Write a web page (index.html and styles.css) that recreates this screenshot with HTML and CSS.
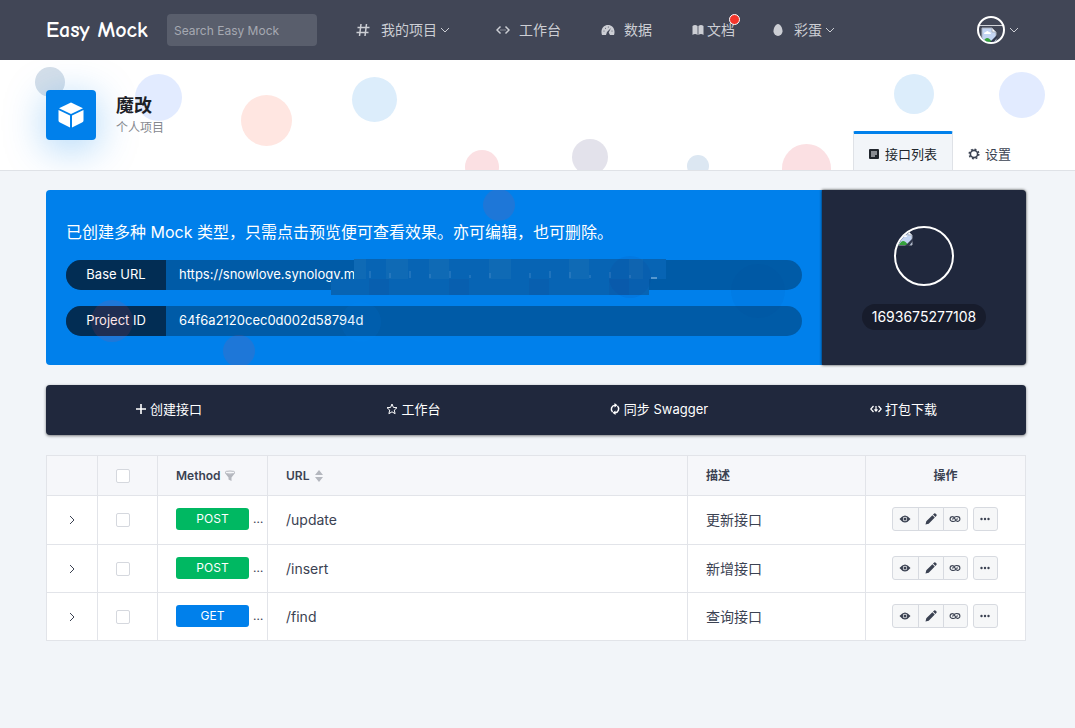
FILE: index.html
```html
<!DOCTYPE html>
<html lang="zh-CN">
<head>
<meta charset="utf-8">
<meta name="viewport" content="width=device-width, initial-scale=1">
<title>Easy Mock</title>
<link rel="stylesheet" href="styles.css">
</head>
<body>
<svg class="sprite" aria-hidden="true">
  <symbol id="down" viewBox="0 0 10 6"><path d="M1 1l4 4 4-4" fill="none" stroke="currentColor"/></symbol>
  <symbol id="right" viewBox="0 0 6 10"><path d="M1 1l4 4-4 4" fill="none" stroke="currentColor"/></symbol>
  <symbol id="eye" viewBox="0 0 12 8"><path fill-rule="evenodd" d="M.5 4Q6-3 11.500 4Q6 11 .5 4zM6 1.800a2.200 2.200 0 1 0 0 4.400 2.200 2.200 0 0 0 0-4.400z" fill="currentColor"/><circle cx="6" cy="4" r="1.500" fill="currentColor"/></symbol>
  <symbol id="pencil" viewBox="0 0 12 12"><path d="M.5 11.500l.8-3.200L7.400 2.200l2.400 2.400-6.100 6.100zM8 1.600L9.200.5q.6-.5 1.200 0l1.100 1.100q.5.600 0 1.200l-1.100 1.200z" fill="currentColor"/></symbol>
  <symbol id="link" viewBox="0 0 12 8"><path d="M7.500 4.500Q6 7 3.500 6.400A2.400 2.400 0 0 1 3.500 1.600Q5 1.400 6 4t2.500 2.400a2.400 2.400 0 0 0 0-4.800Q6 1 4.500 3.500M3 4h1.500M7.500 4H9" fill="none" stroke="currentColor" stroke-width="1.100"/></symbol>
  <symbol id="dots" viewBox="0 0 10 4"><g fill="currentColor"><circle cx="1.500" cy="2" r="1.200"/><circle cx="5" cy="2" r="1.200"/><circle cx="8.500" cy="2" r="1.200"/></g></symbol>
  <symbol id="broken" viewBox="0 0 16 16"><path d="M1 1h10l4 4v10H1z" fill="#c3d4f2" stroke="#a9afba"/><path d="M11 1v4h4z" fill="#fff" stroke="#a9afba"/><path d="M3 7q0-2 2-2 1-2 3 0 2 0 2 2z" fill="#fff"/><path d="M2 15q4-8 9 0z" fill="#35a13c"/><path d="M8 16l8-8v3l-4 5z" fill="#30374b"/></symbol>
</svg>

<header class="topbar">
  <div class="topbar-inner">
    <a class="brand" href="#">Easy Mock</a>
    <input class="search" type="search" placeholder="Search Easy Mock" aria-label="Search Easy Mock">
    <nav class="nav">
      <a class="nav-wide" href="#"><svg class="i14" viewBox="0 0 14 14"><path d="M5 1L3.500 13M10.500 1L9 13M1.500 4.500h12M.5 9.500h12" fill="none" stroke="currentColor" stroke-width="1.500"/></svg><span class="nav-text with-arrow">我的项目<svg class="arrow"><use href="#down"/></svg></span></a>
      <a href="#"><svg class="i14" viewBox="0 0 14 14"><path d="M4.500 3.500L1 7l3.500 3.500M9.500 3.500L13 7l-3.500 3.500" fill="none" stroke="currentColor" stroke-width="1.500"/><path d="M4.500 7h1m1 0h1m1 0h1" stroke="currentColor"/></svg><span class="nav-text">工作台</span></a>
      <a href="#"><svg class="i14" viewBox="0 0 14 14"><path d="M1 12C-1 6 3 2 7 2s8 4 6 10H9L7.700 9.500 10 5 6 9l-1 3z" fill="currentColor"/><g fill="#414656"><circle cx="3" cy="8" r=".5"/><circle cx="4.500" cy="5.200" r=".5"/><circle cx="7.300" cy="4" r=".5"/><circle cx="11" cy="8" r=".5"/></g></svg><span class="nav-text">数据</span></a>
      <a class="docs" href="#"><svg class="i12" viewBox="0 0 12 12"><path d="M.5 2Q3-.2 5.600 2v9Q3 9 .5 11zM6.400 2Q9-.2 11.500 2v9Q9 9 6.400 11z" fill="currentColor"/></svg><span>文档</span><i class="dot"></i></a>
      <a class="extras" href="#"><svg class="egg" viewBox="0 0 10 14"><path d="M5 1c2.500 0 4.500 4 4.500 7.200a4.500 4.800 0 0 1-9 0C.5 5 2.500 1 5 1z" fill="currentColor"/></svg><span class="nav-text with-arrow">彩蛋<svg class="arrow"><use href="#down"/></svg></span></a>
    </nav>
    <button class="account" aria-label="账户"><span class="avatar"><svg><use href="#broken"/></svg></span><svg class="arrow"><use href="#down"/></svg></button>
  </div>
</header>

<section class="project">
  <div class="bubbles" aria-hidden="true">
    <i class="b1"></i><i class="b2"></i><i class="b3"></i><i class="b4"></i><i class="b5"></i><i class="b6"></i><i class="b7"></i><i class="b8"></i><i class="b9"></i><i class="b10"></i>
  </div>
  <div class="project-inner">
    <div class="cube"><svg viewBox="0 0 26 26"><g fill="#fff"><path d="M13 .5L25 6.200 13 12 1 6.200z"/><path d="M.5 8L12 13.600v12L2 20.600Q.5 20 .5 18.500zM25.500 8L14 13.600v12l10-5q1.500-.6 1.500-2.100z"/></g></svg></div>
    <div class="project-name"><h1>魔改</h1><p>个人项目</p></div>
    <nav class="tabs">
      <a class="tab active" href="#"><svg class="i12" viewBox="0 0 12 12"><rect x="1" y="1" width="10" height="10" rx="1" fill="currentColor"/><path d="M3 4h6M3 6h6M3 8h4" stroke="#f2f5f9"/></svg>接口列表</a>
      <a class="tab" href="#"><svg class="i12" viewBox="0 0 12 12"><circle cx="6" cy="6" r="3.600" fill="none" stroke="currentColor" stroke-width="1.600"/><circle cx="6" cy="6" r="4.800" fill="none" stroke="currentColor" stroke-width="1.500" stroke-dasharray="1.900 1.870"/></svg>设置</a>
    </nav>
  </div>
</section>

<main class="content">
  <section class="banner">
    <div class="info">
      <div class="spots" aria-hidden="true"><i class="s1"></i><i class="s2"></i><i class="s3"></i><i class="s4"></i><i class="s5"></i><i class="s6"></i></div>
      <p class="lead">已创建多种 Mock 类型，只需点击预览便可查看效果。亦可编辑，也可删除。</p>
      <dl class="field"><dt>Base URL</dt><dd>https://snowlove.synology.m
        <svg class="mosaic" viewBox="0 0 336 38" aria-hidden="true">
          <path d="M23 0h312v20h-17v16H0V20h23z" fill="#0764b4"/>
          <g fill="#1670b6" opacity=".55"><path d="M23 0h12v20H23zM55 0h22v20H55zM98 0h20v20H98zM158 0h22v20h-22zM238 0h20v20h-20zM298 0h14v20h-14z"/></g>
          <g fill="#0c57a4" opacity=".3"><path d="M38 20h20v16H38zM118 20h20v16h-20zM198 20h20v16h-20zM278 20h20v16h-20z"/></g>
          <path d="M39 12v7M59 14v5M79 12v7M99 15v4M119 12v7M139 16v3M159 14v5M199 14v5M219 12v7M239 13v6M259 16v3M279 13v6M299 16v3" stroke="#68a0d5" stroke-width=".5"/>
          <path d="M320 19h6" stroke="#a6cbea"/>
        </svg></dd></dl>
      <dl class="field"><dt>Project ID</dt><dd>64f6a2120cec0d002d58794d</dd></dl>
    </div>
    <aside class="owner"><div class="portrait"><svg><use href="#broken"/></svg></div><span>1693675277108</span></aside>
  </section>

  <div class="actions">
    <button><svg class="i12" viewBox="0 0 12 12"><path d="M6 1v10M1 6h10" stroke="currentColor" stroke-width="1.600"/></svg>创建接口</button>
    <button><svg class="i12" viewBox="0 0 12 12"><path d="M6 1l1.400 3.400 3.600.3-2.700 2.400.8 3.600L6 8.800l-3.100 1.900.8-3.600L1 4.700l3.600-.3z" fill="none" stroke="currentColor"/></svg>工作台</button>
    <button><svg class="i12" viewBox="0 0 12 12"><path d="M3.500 9A4 4 0 0 1 6 2.200M8.500 3A4 4 0 0 1 6 9.800" fill="none" stroke="currentColor" stroke-width="1.500"/><path d="M5.500 0l3 2.200-3 2.300zM6.500 12l-3-2.200 3-2.300z" fill="currentColor"/></svg>同步 Swagger</button>
    <button><svg class="i12" viewBox="0 0 12 12"><path d="M3.500 3L.8 6l2.700 3M8.500 3l2.700 3-2.700 3M6 3v5M4.500 6.300L6 8l1.500-1.700" fill="none" stroke="currentColor" stroke-width="1.200"/></svg>打包下载</button>
  </div>

  <table class="apis">
    <colgroup><col class="c-expand"><col class="c-check"><col class="c-method"><col><col class="c-desc"><col class="c-ops"></colgroup>
    <thead><tr>
      <th></th><th><input type="checkbox" aria-label="全选"></th>
      <th class="left">Method <svg class="filter" viewBox="0 0 12 12"><ellipse cx="6" cy="2.500" rx="5" ry="1.500" fill="none" stroke="currentColor"/><path d="M1 3q5 2.500 10 0L7.500 7.500V11L4.500 9.500v-2z" fill="currentColor"/></svg></th>
      <th class="left">URL <svg class="sort" viewBox="0 0 8 12"><path d="M0 5l4-5 4 5zM0 7l4 5 4-5z" fill="currentColor"/></svg></th>
      <th class="left">描述</th><th>操作</th>
    </tr></thead>
    <tbody>
      <tr><td><button class="expand" aria-label="展开"><svg><use href="#right"/></svg></button></td><td><input type="checkbox" aria-label="选择 /update"></td><td><div class="method"><span class="tag post">POST</span>…</div></td><td class="left">/update</td><td class="left">更新接口</td><td><div class="ops"><div class="group"><button aria-label="预览"><svg class="i-eye"><use href="#eye"/></svg></button><button aria-label="编辑"><svg class="i12"><use href="#pencil"/></svg></button><button aria-label="复制链接"><svg class="i-link"><use href="#link"/></svg></button></div><button class="more" aria-label="更多"><svg class="i-dots"><use href="#dots"/></svg></button></div></td></tr>
      <tr><td><button class="expand" aria-label="展开"><svg><use href="#right"/></svg></button></td><td><input type="checkbox" aria-label="选择 /insert"></td><td><div class="method"><span class="tag post">POST</span>…</div></td><td class="left">/insert</td><td class="left">新增接口</td><td><div class="ops"><div class="group"><button aria-label="预览"><svg class="i-eye"><use href="#eye"/></svg></button><button aria-label="编辑"><svg class="i12"><use href="#pencil"/></svg></button><button aria-label="复制链接"><svg class="i-link"><use href="#link"/></svg></button></div><button class="more" aria-label="更多"><svg class="i-dots"><use href="#dots"/></svg></button></div></td></tr>
      <tr><td><button class="expand" aria-label="展开"><svg><use href="#right"/></svg></button></td><td><input type="checkbox" aria-label="选择 /find"></td><td><div class="method"><span class="tag get">GET</span>…</div></td><td class="left">/find</td><td class="left">查询接口</td><td><div class="ops"><div class="group"><button aria-label="预览"><svg class="i-eye"><use href="#eye"/></svg></button><button aria-label="编辑"><svg class="i12"><use href="#pencil"/></svg></button><button aria-label="复制链接"><svg class="i-link"><use href="#link"/></svg></button></div><button class="more" aria-label="更多"><svg class="i-dots"><use href="#dots"/></svg></button></div></td></tr>
    </tbody>
  </table>
</main>
</body>
</html>
```
FILE: styles.css
```css
* { box-sizing: border-box; }
body {
  margin: 0;
  background: #f2f5f9;
  color: #3b4252;
  font: 14px/20px Inter, "Noto Sans CJK SC", sans-serif;
}
a { color: inherit; text-decoration: none; }
button { font: inherit; color: inherit; border: 0; background: none; padding: 0; cursor: pointer; }
svg { flex: none; display: block; }
.sprite { position: absolute; width: 0; height: 0; }
.i14 { width: 14px; height: 14px; }
.i12 { width: 12px; height: 12px; }
.arrow { width: 10px; height: 6px; }

/* Top bar */
.topbar { background: #414656; color: #ccced4; }
.topbar-inner { display: flex; align-items: center; height: 60px; padding: 0 56px 0 46px; }
.brand { width: 121px; color: #fff; font: 700 22px/28px "Comic Neue", "Comic Sans MS", "Open Sans", sans-serif; white-space: nowrap; }
.search {
  width: 150px; height: 32px; padding: 0 7px; margin: 0;
  border: 0; border-radius: 4px; background: #595e6c;
  color: #fff; font: 12px Inter, sans-serif; outline: 0; appearance: none;
}
.search::placeholder { color: #a6a9b2; opacity: 1; }
.nav { display: flex; align-items: center; gap: 40px; margin-left: 39px; white-space: nowrap; }
.nav a { display: flex; align-items: center; gap: 9px; }
.nav .nav-wide { gap: 11px; margin-right: 6px; }
.nav-text { display: flex; align-items: center; }
.with-arrow { gap: 3px; }
.nav .docs { position: relative; gap: 3px; }
.nav .extras { gap: 11px; margin-left: -2px; }
.egg { width: 10px; height: 14px; }
.dot { position: absolute; top: -2px; right: -5px; width: 11px; height: 11px; border: 1px solid #fff; border-radius: 50%; background: #f5352b; }
.account { display: flex; align-items: center; gap: 4px; margin-left: auto; }
.avatar { display: block; width: 28px; height: 28px; padding: 9px 0 0 2px; border: 2px solid #fff; border-radius: 50%; overflow: hidden; background: linear-gradient(#d0d2d7, #d0d2d7) 0 7px / 100% 1px no-repeat; }
.avatar svg { width: 16px; height: 16px; }
.nav .dot { top: -6px; }

/* Project header */
.project { position: relative; overflow: hidden; background: #fff; border-bottom: 1px solid #dfe2e7; }
.project-inner { position: relative; display: flex; align-items: center; height: 110px; padding: 0 49px 0 46px; }
.bubbles, .spots { position: absolute; inset: 0; overflow: hidden; }
.bubbles i, .spots i { position: absolute; border-radius: 50%; }
.bubbles .b1 { left: 3.3%; top: 7px; width: 30px; height: 30px; background: #d5dfe9; }
.bubbles .b2 { left: 12.6%; top: 14px; width: 47px; height: 47px; background: #e2ebff; }
.bubbles .b3 { left: 22.4%; top: 35px; width: 51px; height: 51px; background: #ffe6e1; }
.bubbles .b4 { left: 32.7%; top: 17px; width: 45px; height: 45px; background: #dcedfb; }
.bubbles .b5 { left: 43.3%; top: 90px; width: 34px; height: 34px; background: #fbe0e3; }
.bubbles .b6 { left: 53.2%; top: 79px; width: 36px; height: 36px; background: #e3e2eb; }
.bubbles .b7 { left: 63.9%; top: 95px; width: 22px; height: 22px; background: #dce7f2; }
.bubbles .b8 { left: 72.7%; top: 84px; width: 49px; height: 49px; background: #fbe0e3; }
.bubbles .b9 { left: 83.2%; top: 14px; width: 40px; height: 40px; background: #dcedfb; }
.bubbles .b10 { left: 92.9%; top: 12px; width: 46px; height: 46px; background: #e2ebff; }
.cube { display: grid; place-items: center; width: 50px; height: 50px; border-radius: 4px; background: #0080eb; box-shadow: 0 8px 40px rgba(0, 128, 235, .35); }
.cube svg { width: 26px; height: 26px; }
.project-name { margin-left: 20px; padding-top: 2px; }
.project-name h1 { margin: 0; color: #1c2127; font-size: 18px; line-height: 24px; font-weight: 700; }
.project-name p { margin: 0; color: #85888e; font-size: 12px; line-height: 20px; }
.tabs { display: flex; align-self: flex-end; margin-left: auto; }
.tab { display: flex; align-items: center; gap: 5px; height: 39px; padding: 7px 15px 0; font-size: 13px; }
.tab.active { color: #20252c; background: #f2f5f9; border: solid #dfe2e7; border-width: 3px 1px 0; border-top-color: #0080eb; border-radius: 2px 2px 0 0; padding: 4px 15px 0 14px; }

/* Banner */
.content { padding: 19px 49px 40px 46px; }
.banner { display: flex; color: #fff; }
.info { position: relative; flex: 1; height: 175px; padding: 32px 20px 0; background: #0080eb; border-radius: 4px 0 0 4px; }
.lead { margin: 0 0 18px; font-size: 16px; line-height: 20px; white-space: nowrap; }
.field { display: flex; height: 30px; margin: 0 0 16px; border-radius: 15px; background: #005ba7; font-size: 13px; line-height: 29px; }
.field dt { width: 100px; text-align: center; border-radius: 15px 0 0 15px; background: #022d54; }
.field dd { position: relative; flex: 1; margin: 0; padding-left: 13px; white-space: nowrap; }
.mosaic { position: absolute; left: 165px; top: -1px; width: 336px; height: 38px; }
.spots { z-index: 1; pointer-events: none; }
.spots i { width: 32px; height: 32px; background: #f53c50; opacity: .12; }
.spots .s1 { left: 56.3%; top: -1px; }
.spots .s2 { left: 22.8%; top: 145px; }
.spots .s3 { left: 5.8%; top: 110px; width: 42px; height: 42px; }
.spots .s4 { left: 72.5%; top: 66px; width: 42px; height: 42px; background: #14287a; opacity: .08; }
.spots .s5 { left: 88.3%; top: 74px; width: 54px; height: 54px; background: #004080; opacity: .05; }
.spots .s6 { left: 38%; top: 112px; width: 40px; height: 40px; background: #0090ff; opacity: .08; }
.owner { display: flex; flex-direction: column; align-items: center; gap: 18px; width: 204px; padding-top: 36px; background: #20283d; border-radius: 0 4px 4px 0; box-shadow: 0 0 3px rgba(0, 0, 0, .8); z-index: 1; }
.portrait { width: 60px; height: 60px; padding: 2px 0 0 1px; border: 2px solid #fff; border-radius: 50%; overflow: hidden; }
.portrait svg { width: 16px; height: 16px; }
.owner span { padding: 3px 10px; border-radius: 13px; background: #171c2c; }

/* Actions */
.actions { display: grid; grid-template-columns: repeat(4, 1fr); height: 50px; margin: 20px 0; color: #fff; background: #20283d; border-radius: 4px; box-shadow: 0 1px 3px rgba(0, 0, 0, .5); }
.actions button { display: flex; align-items: center; justify-content: center; gap: 3px; padding-bottom: 2px; font-size: 13px; }

/* Table */
.apis { width: 100%; table-layout: fixed; border-collapse: collapse; background: #fff; border: 1px solid #d7dae0; }
.c-expand { width: 51px; }
.c-check { width: 60px; }
.c-method { width: 110px; }
.c-desc { width: 178px; }
.c-ops { width: 160px; }
.apis th, .apis td { height: 48px; padding: 0; border: 1px solid #e2e4e9; text-align: center; vertical-align: middle; }
.apis th { height: 40px; background: #f6f7fa; font-size: 12px; font-weight: 600; }
.apis tbody tr:first-child td { height: 49px; }
.apis .left { padding-left: 18px; text-align: left; }
.apis th svg { display: inline-block; vertical-align: -2px; color: #b4b7be; }
.filter { width: 12px; height: 12px; }
.sort { width: 8px; height: 12px; margin-left: 3px; }
.apis input { display: block; width: 14px; height: 14px; margin: 0 auto; border: 1px solid #d5d8de; border-radius: 2px; background: #fff; appearance: none; }
.apis th:nth-child(2), .apis td:nth-child(2) { padding-right: 10px; }
.expand { display: grid; place-items: center; width: 20px; height: 20px; margin: 0 auto; }
.expand svg { width: 6px; height: 10px; }
.method { display: flex; align-items: center; gap: 4px; padding: 0 0 2px 18px; font-size: 12px; }
.tag { width: 73px; border-radius: 3px; color: #fff; line-height: 22px; }
.post { background: #00b862; }
.get { background: #0080eb; }
.ops { display: flex; justify-content: center; gap: 5px; padding: 0 2px 2px 0; }
.group { display: flex; }
.ops button { display: grid; place-items: center; width: 26px; height: 24px; border: 1px solid #d7dae0; background: #f6f7f8; }
.group button + button { margin-left: -1px; }
.group button:first-child { width: 27px; border-radius: 3px 0 0 3px; }
.group button:last-child { width: 25px; border-radius: 0 3px 3px 0; }
.ops .more { width: 25px; border-radius: 3px; }
.i-eye, .i-link { width: 12px; height: 8px; }
.i-dots { width: 10px; height: 4px; }
```
